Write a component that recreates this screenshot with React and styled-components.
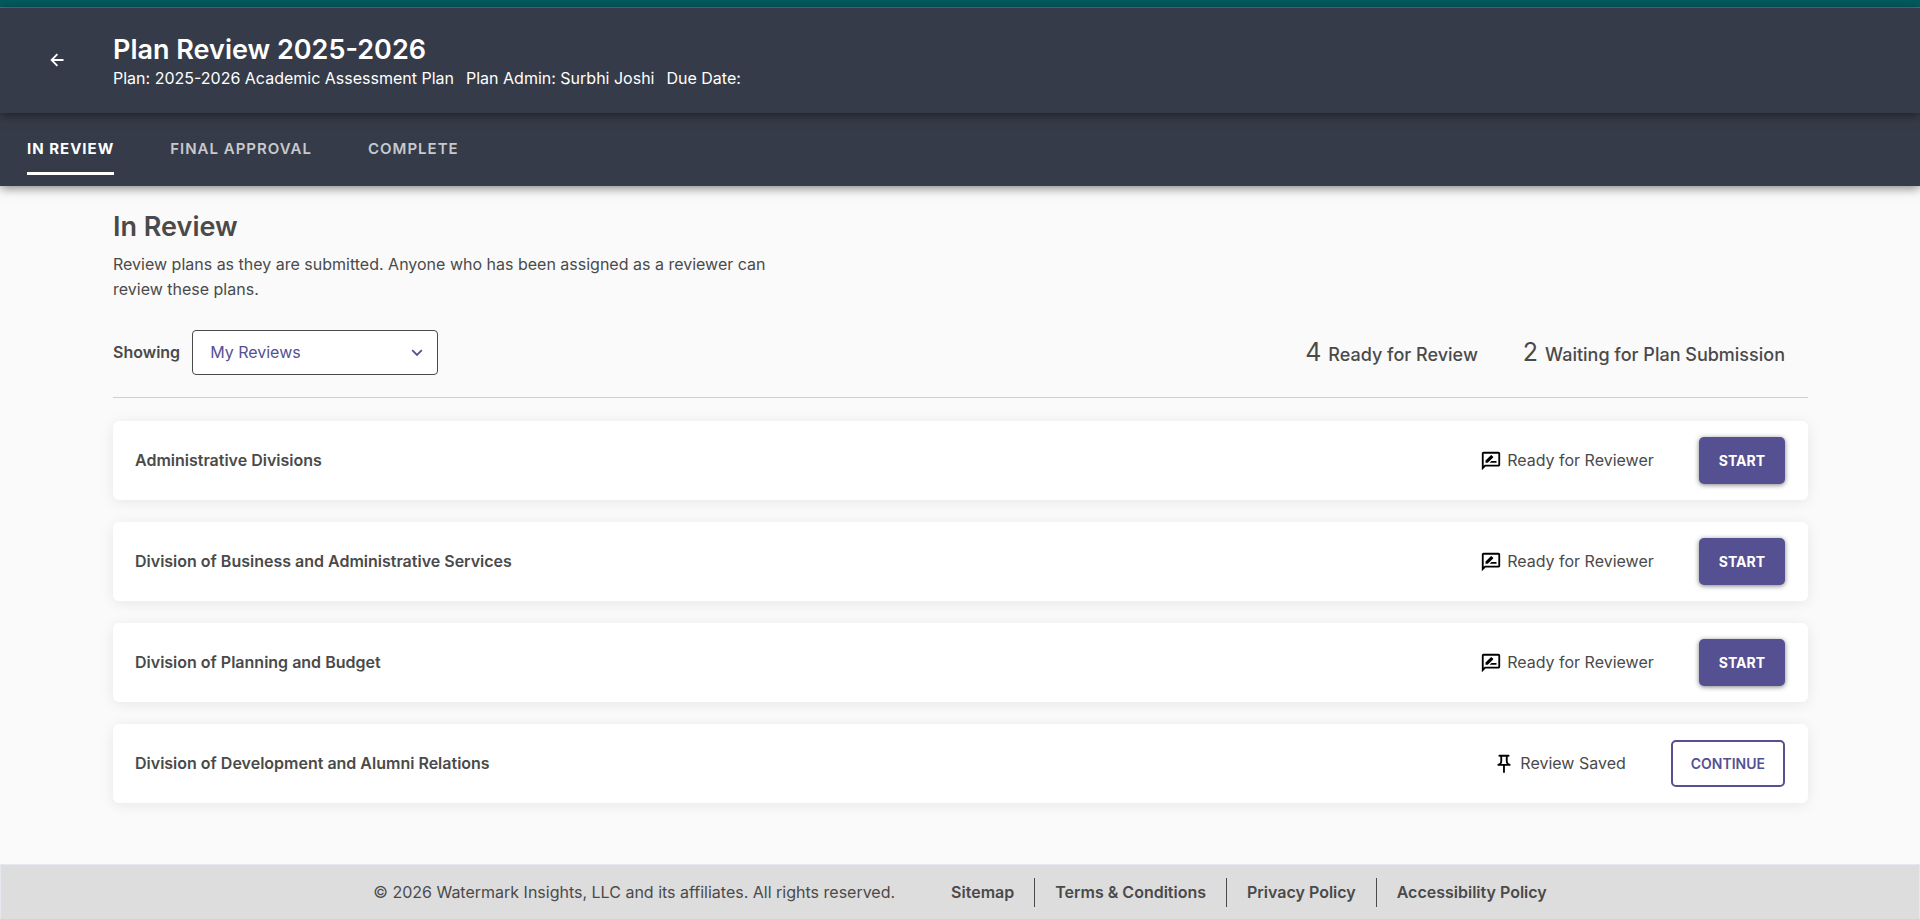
import React, { useState } from "react";
import styled, { createGlobalStyle } from "styled-components";
import { MdOutlineRateReview, MdOutlinePushPin } from "react-icons/md";

const tabs = ["In Review", "Final Approval", "Complete"];

const plans = [
  { id: 1, name: "Administrative Divisions", saved: false },
  { id: 2, name: "Division of Business and Administrative Services", saved: false },
  { id: 3, name: "Division of Planning and Budget", saved: false },
  { id: 4, name: "Division of Development and Alumni Relations", saved: true },
];

const links = ["Sitemap", "Terms & Conditions", "Privacy Policy", "Accessibility Policy"];

const PlanRow = ({ plan }) => (
  <Card>
    <PlanName>{plan.name}</PlanName>
    <Status>
      {plan.saved ? <MdOutlinePushPin /> : <MdOutlineRateReview />}
      {plan.saved ? "Review Saved" : "Ready for Reviewer"}
    </Status>
    <ActionButton type="button" $outlined={plan.saved}>
      {plan.saved ? "Continue" : "Start"}
    </ActionButton>
  </Card>
);

const App = () => {
  const [activeTab, setActiveTab] = useState(tabs[0]);
  const [filter, setFilter] = useState("My Reviews");

  return (
    <Page>
      <GlobalStyle />
      <TopStrip />
      <Header>
        <BackButton type="button" aria-label="Back">
          <svg width="14" height="14" viewBox="0 0 14 14" fill="none" stroke="currentColor" strokeWidth="1.8">
            <path d="M13.5 7H1.6M7.4 1.2L1.6 7l5.8 5.8" />
          </svg>
        </BackButton>
        <HeaderText>
          <Title>Plan Review 2025-2026</Title>
          <Details>
            <span>Plan: 2025-2026 Academic Assessment Plan</span>
            <span>Plan Admin: Surbhi Joshi</span>
            <span>Due Date:</span>
          </Details>
        </HeaderText>
      </Header>
      <Tabs>
        {tabs.map((tab) => (
          <Tab key={tab} type="button" $active={tab === activeTab} onClick={() => setActiveTab(tab)}>
            {tab}
          </Tab>
        ))}
      </Tabs>

      <Main>
        <Heading>In Review</Heading>
        <Intro>
          Review plans as they are submitted. Anyone who has been assigned as a reviewer can review these plans.
        </Intro>
        <Toolbar>
          <FilterLabel htmlFor="showing">Showing</FilterLabel>
          <SelectWrap>
            <Select id="showing" value={filter} onChange={(e) => setFilter(e.target.value)}>
              <option>My Reviews</option>
              <option>All Reviews</option>
            </Select>
            <svg width="12" height="8" viewBox="0 0 12 8" fill="none" stroke="currentColor" strokeWidth="1.8">
              <path d="M1.2 1.2L6 6l4.8-4.8" />
            </svg>
          </SelectWrap>
          <Stats>
            <Stat>
              <Count>4</Count>Ready for Review
            </Stat>
            <Stat>
              <Count>2</Count>Waiting for Plan Submission
            </Stat>
          </Stats>
        </Toolbar>
        <Cards>
          {plans.map((plan) => (
            <PlanRow key={plan.id} plan={plan} />
          ))}
        </Cards>
      </Main>

      <Footer>
        <span>© 2026 Watermark Insights, LLC and its affiliates. All rights reserved.</span>
        <FooterNav>
          {links.map((link) => (
            <FooterLink key={link} href="#">
              {link}
            </FooterLink>
          ))}
        </FooterNav>
      </Footer>
    </Page>
  );
};

// Styled components
const GlobalStyle = createGlobalStyle`
  * {
    box-sizing: border-box;
  }

  body {
    margin: 0;
    background: #fafafa;
    color: #4a4a4a;
    font-family: Inter, "Liberation Sans", sans-serif;
    font-size: 16px;
    line-height: 25px;
  }

  button, select {
    font-family: inherit;
    cursor: pointer;
  }
`;

const Page = styled.div`
  display: flex;
  flex-direction: column;
  min-height: 100vh;
`;

const TopStrip = styled.div`
  height: 8px;
  background: #045a5f;
  border-bottom: 1px solid #3f7d83;
`;

const Header = styled.header`
  position: relative;
  z-index: 2;
  display: flex;
  align-items: center;
  height: 105px;
  background: #363b49;
  color: #fff;
  box-shadow: 0 2px 10px rgba(0, 0, 0, 0.5);
`;

const BackButton = styled.button`
  display: flex;
  justify-content: center;
  align-items: center;
  width: 113px;
  height: 48px;
  margin-bottom: 2px;
  padding: 0;
  border: 0;
  background: none;
  color: inherit;
`;

const HeaderText = styled.div`
  padding-top: 3px;
`;

const Title = styled.h1`
  margin: 0;
  font-size: 27px;
  font-weight: 600;
  line-height: 32px;
`;

const Details = styled.div`
  display: flex;
  gap: 12px;
`;

const Tabs = styled.nav`
  position: relative;
  z-index: 1;
  display: flex;
  align-items: flex-start;
  gap: 56px;
  height: 73px;
  padding: 22px 27px 0;
  background: #363b49;
  box-shadow: 0 2px 10px rgba(0, 0, 0, 0.5);
`;

const Tab = styled.button`
  height: 40px;
  padding: 0 0 10px;
  border: 0;
  border-bottom: 3px solid ${({ $active }) => ($active ? "#fff" : "transparent")};
  background: none;
  color: ${({ $active }) => ($active ? "#fff" : "#c8c9cd")};
  font-size: 15px;
  font-weight: ${({ $active }) => ($active ? 700 : 600)};
  letter-spacing: 1px;
  line-height: 27px;
  text-transform: uppercase;
`;

const Main = styled.main`
  flex: 1;
  padding: 23px 112px 56px 113px;
`;

const Heading = styled.h2`
  margin: 0 0 7px;
  font-size: 27px;
  font-weight: 600;
  line-height: 36px;
`;

const Intro = styled.p`
  max-width: 675px;
  margin: 0;
`;

const Toolbar = styled.div`
  display: flex;
  align-items: center;
  padding: 28px 23px 22px 0;
  border-bottom: 1px solid #cfcfcf;
`;

const FilterLabel = styled.label`
  margin-right: 12px;
  font-weight: 600;
`;

const SelectWrap = styled.div`
  position: relative;
  color: #555092;

  svg {
    position: absolute;
    top: 19px;
    right: 15px;
    pointer-events: none;
  }
`;

const Select = styled.select`
  display: block;
  width: 246px;
  height: 45px;
  padding: 0 17px 2px;
  appearance: none;
  border: 1px solid #4a4a4a;
  border-radius: 4px;
  background: #fff;
  color: inherit;
  font-size: 16px;
`;

const Stats = styled.div`
  display: flex;
  gap: 45px;
  margin-left: auto;
  padding-top: 2px;
`;

const Stat = styled.div`
  display: flex;
  align-items: baseline;
  gap: 7px;
  font-size: 18px;
  font-weight: 500;
`;

const Count = styled.span`
  font-size: 25px;
  font-weight: 400;
`;

const Cards = styled.div`
  display: flex;
  flex-direction: column;
  gap: 22px;
  padding-top: 23px;
`;

const Card = styled.article`
  display: flex;
  align-items: center;
  padding: 16px 23px 16px 22px;
  border-radius: 6px;
  background: #fff;
  box-shadow: 0 2px 14px rgba(0, 0, 0, 0.08);
`;

const PlanName = styled.h3`
  flex: 1;
  margin: 0;
  font-size: 16px;
  font-weight: 600;
`;

const Status = styled.div`
  display: flex;
  align-items: center;
  gap: 5px;
  margin-right: 45px;

  svg {
    width: 22px;
    height: 22px;
    color: #000;
  }
`;

const ActionButton = styled.button`
  height: 47px;
  padding: 0 ${({ $outlined }) => ($outlined ? 18 : 20)}px;
  border: ${({ $outlined }) => ($outlined ? "2px solid #555092" : "0")};
  border-radius: 5px;
  background: ${({ $outlined }) => ($outlined ? "#fff" : "#555092")};
  color: ${({ $outlined }) => ($outlined ? "#555092" : "#fff")};
  box-shadow: ${({ $outlined }) => ($outlined ? "none" : "0 1px 5px rgba(0, 0, 0, 0.5)")};
  font-size: 14px;
  font-weight: ${({ $outlined }) => ($outlined ? 600 : 700)};
  text-transform: uppercase;
`;

const Footer = styled.footer`
  display: flex;
  justify-content: center;
  align-items: center;
  gap: 56px;
  min-height: 55px;
  border: 1px solid #e6e8f0;
  border-bottom: 0;
  background: #ddd;
`;

const FooterNav = styled.nav`
  display: flex;
`;

const FooterLink = styled.a`
  padding: 2px 20px;
  border-right: 1px solid #4a4a4a;
  color: inherit;
  font-weight: 600;
  text-decoration: none;

  &:first-child {
    padding-left: 0;
  }

  &:last-child {
    padding-right: 0;
    border-right: 0;
  }
`;

export default App;
